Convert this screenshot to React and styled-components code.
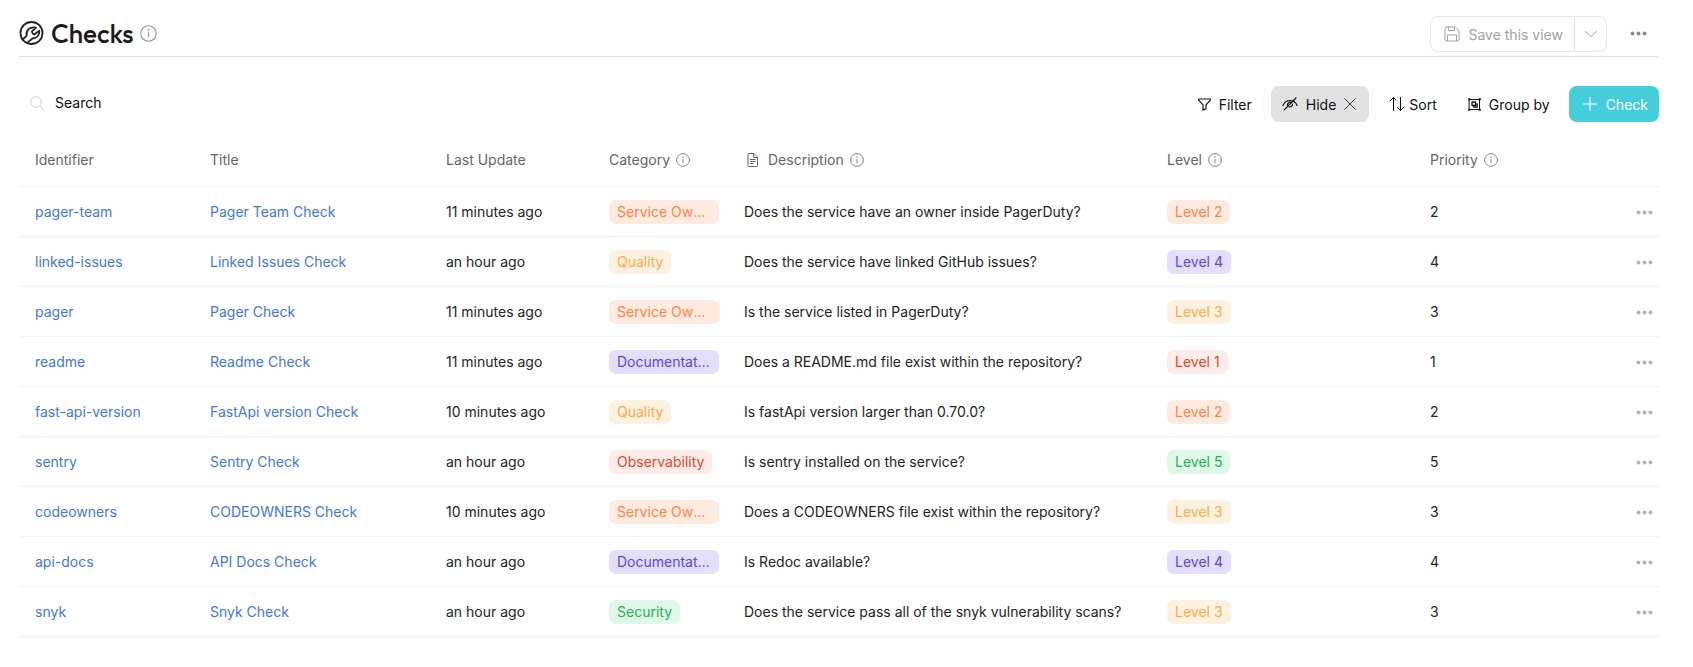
import React from "react";
import styled, { createGlobalStyle } from "styled-components";

const GlobalStyle = createGlobalStyle`
  *, *::before, *::after { box-sizing: border-box; }
  body {
    margin: 0;
    background: #fefefe;
    color: #242424;
    font: 14px/20px Inter, "Liberation Sans", sans-serif;
  }
  button, input { font: inherit; color: inherit; }
  svg { display: block; flex: none; }
`;

const Page = styled.main`
  padding: 0 34px 24px 19px;
`;

const Header = styled.header`
  display: flex;
  align-items: center;
  justify-content: space-between;
  height: 57px;
  padding-top: 11px;
  border-bottom: 1px solid #e2e2e5;
`;

const TitleGroup = styled.div`
  display: flex;
  align-items: center;
  > svg:first-child { margin-bottom: 3px; }
`;

const Title = styled.h1`
  margin: 0 7px;
  font: 500 26px/32px Outfit, Lato, sans-serif;
  color: #1c1c1c;
`;

const HeaderActions = styled.div`
  display: flex;
  align-items: center;
  gap: 11px;
  padding-right: 1px;
`;

const SplitButton = styled.div`
  display: flex;
  height: 36px;
  border: 1px solid #e9e9e9;
  border-radius: 8px;
  color: #a3a3a3;
`;

const SplitPart = styled.button`
  display: flex;
  align-items: center;
  justify-content: center;
  gap: 8px;
  padding: 2px ${(p) => (p.$narrow ? "8px 0 9px" : "11px 0 13px")};
  background: none;
  border: 0;
  border-left: ${(p) => (p.$narrow ? "1px solid #e2e2e2" : "0")};
  svg { margin-bottom: 2px; }
`;

const IconButton = styled.button`
  display: flex;
  align-items: center;
  justify-content: center;
  width: ${(p) => p.$width}px;
  height: 24px;
  padding: 0;
  border: 0;
  background: none;
  color: ${(p) => p.$tone};
`;

const Toolbar = styled.div`
  display: flex;
  align-items: flex-start;
  justify-content: space-between;
  margin-top: 29px;
`;

const SearchBox = styled.label`
  display: flex;
  align-items: center;
  gap: 10px;
  height: 34px;
  padding-left: 11px;
  color: #d4d4d4;
`;

const SearchInput = styled.input`
  width: 240px;
  padding: 0;
  border: 0;
  outline: 0;
  background: none;
  color: #242424;
  &::placeholder { color: #111; opacity: 1; }
`;

const Actions = styled.div`
  display: flex;
  gap: 8px;
`;

const ToolButton = styled.button`
  display: flex;
  align-items: center;
  gap: ${(p) => p.$gap || 8}px;
  height: 36px;
  padding: 2px 11px 0 12px;
  border: 0;
  border-radius: 8px;
  color: #111;
  background: none;
  svg { margin-bottom: 2px; }
`;

const ActiveToolButton = styled(ToolButton)`
  padding: 2px 13px 0 11px;
  background: #e2e2e2;
`;

const PrimaryButton = styled(ToolButton)`
  padding: 2px 11px 0 13px;
  color: #fff;
  background: #46cddc;
`;

const Table = styled.table`
  width: 100%;
  margin-top: 14px;
  table-layout: fixed;
  border-collapse: separate;
  border-spacing: 0;
`;

const Col = styled.col`
  width: ${(p) => p.$width};
`;

const HeadCell = styled.th`
  height: 51px;
  padding: 0 0 3px 16px;
  border-bottom: 1px solid #f1f1f1;
  text-align: left;
  font-weight: 400;
  color: #666;
  vertical-align: middle;
`;

const HeadLabel = styled.span`
  display: flex;
  align-items: center;
  gap: 6px;
`;

const Cell = styled.td`
  height: 50px;
  padding: 1px 0 0 16px;
  border-bottom: 1px solid #f1f1f1;
  white-space: nowrap;
  vertical-align: middle;
`;

const MenuCell = styled(Cell)`
  padding: 1px 0 0;
`;

const Link = styled.a`
  color: #4379db;
  text-decoration: none;
`;

const tones = {
  orange: ["#ffeae0", "#fb8548"],
  yellow: ["#fff1df", "#f9ac4c"],
  purple: ["#e2dfff", "#5c45ee"],
  red: ["#ffebe8", "#e4472c"],
  green: ["#dff8e7", "#27b057"],
};

const Tag = styled.span`
  display: block;
  width: fit-content;
  max-width: 110px;
  padding: 2px 8px;
  border-radius: 7px;
  overflow: hidden;
  text-overflow: ellipsis;
  background: ${(p) => tones[p.$tone][0]};
  color: ${(p) => tones[p.$tone][1]};
`;

function Icon({ size = 16, box = 16, weight = 1, children }) {
  return (
    <svg width={size} height={size} viewBox={`0 0 ${box} ${box}`} fill="none" stroke="currentColor"
      strokeWidth={weight} strokeLinecap="round" strokeLinejoin="round" aria-hidden="true">
      {children}
    </svg>
  );
}

const InfoIcon = ({ size = 14, color = "#777" }) => (
  <svg width={size} height={size} viewBox="0 0 14 14" fill="none" stroke={color} strokeWidth="0.9" aria-hidden="true">
    <circle cx="7" cy="7" r="6.4" />
    <path d="M7 6v4.2" />
    <circle cx="7" cy="4.1" r=".3" />
  </svg>
);

const WrenchIcon = () => (
  <Icon size={25} box={25} weight={1.8}>
    <circle cx="12.500" cy="13" r="11" />
    <path d="M3.800 19.500 7.700 15.600C6.600 10.800 11 5.900 17 7.700l-3.600 3.200c-.8.8-.4 1.500 0 1.900.3.500.4 1.400 1.200 1.600.8.200 1.300-.4 1.900-.9l3.800-2.900c.5 4.800-2.700 7.400-6.800 7.900L8.600 22.400" />
  </Icon>
);

const SaveIcon = () => (
  <Icon>
    <path d="M2.500 1h8.700L15 4.500v9a1.500 1.500 0 0 1-1.500 1.500h-11A1.500 1.500 0 0 1 1 13.500v-11A1.500 1.500 0 0 1 2.500 1zM4.500 1v3.500h6V1M3.500 15V9h9v6" />
  </Icon>
);

const DotsIcon = () => (
  <svg width="17" height="5" viewBox="0 0 17 5" fill="currentColor" aria-hidden="true">
    <circle cx="2.500" cy="2.500" r="2" />
    <circle cx="8.500" cy="2.500" r="2" />
    <circle cx="14.500" cy="2.500" r="2" />
  </svg>
);

const FilterIcon = () => (
  <Icon size={13} box={13} weight={1.2}>
    <path d="M.7 1h11.600v1.200L8 6.800v3.800L5 12.200V6.800L.7 2.200z" />
  </Icon>
);

const HideIcon = () => (
  <Icon weight={1.2}>
    <path d="M1 9.500C3.500 2.800 12.500 2.800 15 9.500M2.200 13.800 14 2M5.700 9.800a2.500 2.500 0 0 1 3.800-3M10.400 8.200a2.500 2.500 0 0 1-3.200 2.700" />
  </Icon>
);

const CloseIcon = () => (
  <Icon size={12} box={12} weight={0.8}><path d="m.7.700 10.600 10.600M11.300.700.700 11.300" /></Icon>
);

const SortIcon = () => (
  <Icon><path d="M4.500 14.500v-13M1 5l3.500-3.500L7 4M11.500 1.500v13M8.500 11.500l3 3L15 11" /></Icon>
);

const GroupIcon = () => (
  <Icon size={13} box={13} weight={1}>
    <path d="M1.500 1.500h10v10h-10z" />
    <path strokeWidth="1.300" d="M4 4h3.500v3.500H4zM8 5.800h1.200v3.400H5.800V8" />
    <path strokeWidth="2" strokeLinecap="square" d="M1.200 1.200h.1M11.700 1.200h.1M1.200 11.700h.1M11.700 11.700h.1" />
  </Icon>
);

const PlusIcon = () => (
  <Icon><path d="M8 1.500v13M1.500 8h13" /></Icon>
);

const SearchIcon = () => (
  <Icon size={15} box={15}><circle cx="6" cy="6" r="5.300" /><path d="m10 10 4.300 4.300" /></Icon>
);

const ChevronIcon = () => (
  <Icon size={14} box={14}><path d="m1.500 4.500 5.500 5 5.500-5" /></Icon>
);

const FileIconBox = styled.span`
  margin-right: 2px;
`;

const FileIcon = () => (
  <FileIconBox>
    <Icon>
      <path d="M5 1.500h5l3.500 3.500v8.500a1 1 0 0 1-1 1H5a1 1 0 0 1-1-1v-11a1 1 0 0 1 1-1zM9.500 1.800v3.700h4M6.300 7.500h4.900M6.300 9.500h4.900M6.300 11.500h3" />
    </Icon>
  </FileIconBox>
);

const columns = [
  { label: "Identifier", width: "175px" },
  { label: "Title", width: "236px" },
  { label: "Last Update", width: "163px" },
  { label: "Category", width: "135px", info: true },
  { label: "Description", width: "auto", info: true, file: true },
  { label: "Level", width: "263px", info: true },
  { label: "Priority", width: "215px", info: true },
];

const levelTones = { 1: "red", 2: "orange", 3: "yellow", 4: "purple", 5: "green" };

const categoryTones = {
  "Service Ownership": "orange",
  Quality: "yellow",
  Documentation: "purple",
  Observability: "red",
  Security: "green",
};

const rows = [
  ["pager-team", "Pager Team Check", "11 minutes ago", "Service Ownership", "Does the service have an owner inside PagerDuty?", 2],
  ["linked-issues", "Linked Issues Check", "an hour ago", "Quality", "Does the service have linked GitHub issues?", 4],
  ["pager", "Pager Check", "11 minutes ago", "Service Ownership", "Is the service listed in PagerDuty?", 3],
  ["readme", "Readme Check", "11 minutes ago", "Documentation", "Does a README.md file exist within the repository?", 1],
  ["fast-api-version", "FastApi version Check", "10 minutes ago", "Quality", "Is fastApi version larger than 0.70.0?", 2],
  ["sentry", "Sentry Check", "an hour ago", "Observability", "Is sentry installed on the service?", 5],
  ["codeowners", "CODEOWNERS Check", "10 minutes ago", "Service Ownership", "Does a CODEOWNERS file exist within the repository?", 3],
  ["api-docs", "API Docs Check", "an hour ago", "Documentation", "Is Redoc available?", 4],
  ["snyk", "Snyk Check", "an hour ago", "Security", "Does the service pass all of the snyk vulnerability scans?", 3],
];

export default function App() {
  return (
    <Page>
      <GlobalStyle />
      <Header>
        <TitleGroup>
          <WrenchIcon />
          <Title>Checks</Title>
          <InfoIcon size={17} color="#999" />
        </TitleGroup>
        <HeaderActions>
          <SplitButton>
            <SplitPart type="button"><SaveIcon />Save this view</SplitPart>
            <SplitPart type="button" $narrow aria-label="More save options"><ChevronIcon /></SplitPart>
          </SplitButton>
          <IconButton type="button" $width={40} $tone="#8c8c8c" aria-label="Page menu"><DotsIcon /></IconButton>
        </HeaderActions>
      </Header>
      <Toolbar>
        <SearchBox>
          <SearchIcon />
          <SearchInput type="text" placeholder="Search" aria-label="Search" />
        </SearchBox>
        <Actions>
          <ToolButton type="button"><FilterIcon />Filter</ToolButton>
          <ActiveToolButton type="button"><HideIcon />Hide<CloseIcon /></ActiveToolButton>
          <ToolButton type="button" $gap={4}><SortIcon />Sort</ToolButton>
          <ToolButton type="button"><GroupIcon />Group by</ToolButton>
          <PrimaryButton type="button"><PlusIcon />Check</PrimaryButton>
        </Actions>
      </Toolbar>
      <Table>
        <colgroup>
          {columns.map((c) => <Col key={c.label} $width={c.width} />)}
          <Col $width="30px" />
        </colgroup>
        <thead>
          <tr>
            {columns.map((c) => (
              <HeadCell key={c.label} scope="col">
                <HeadLabel>
                  {c.file && <FileIcon />}
                  {c.label}
                  {c.info && <InfoIcon />}
                </HeadLabel>
              </HeadCell>
            ))}
            <HeadCell as="td" />
          </tr>
        </thead>
        <tbody>
          {rows.map(([id, title, updated, category, description, level]) => (
            <tr key={id}>
              <Cell><Link href={`#${id}`}>{id}</Link></Cell>
              <Cell><Link href={`#${id}`}>{title}</Link></Cell>
              <Cell>{updated}</Cell>
              <Cell><Tag $tone={categoryTones[category]}>{category}</Tag></Cell>
              <Cell>{description}</Cell>
              <Cell><Tag $tone={levelTones[level]}>Level {level}</Tag></Cell>
              <Cell>{level}</Cell>
              <MenuCell>
                <IconButton type="button" $width={30} $tone="#b3b3b3" aria-label={`Actions for ${title}`}><DotsIcon /></IconButton>
              </MenuCell>
            </tr>
          ))}
        </tbody>
      </Table>
    </Page>
  );
}
